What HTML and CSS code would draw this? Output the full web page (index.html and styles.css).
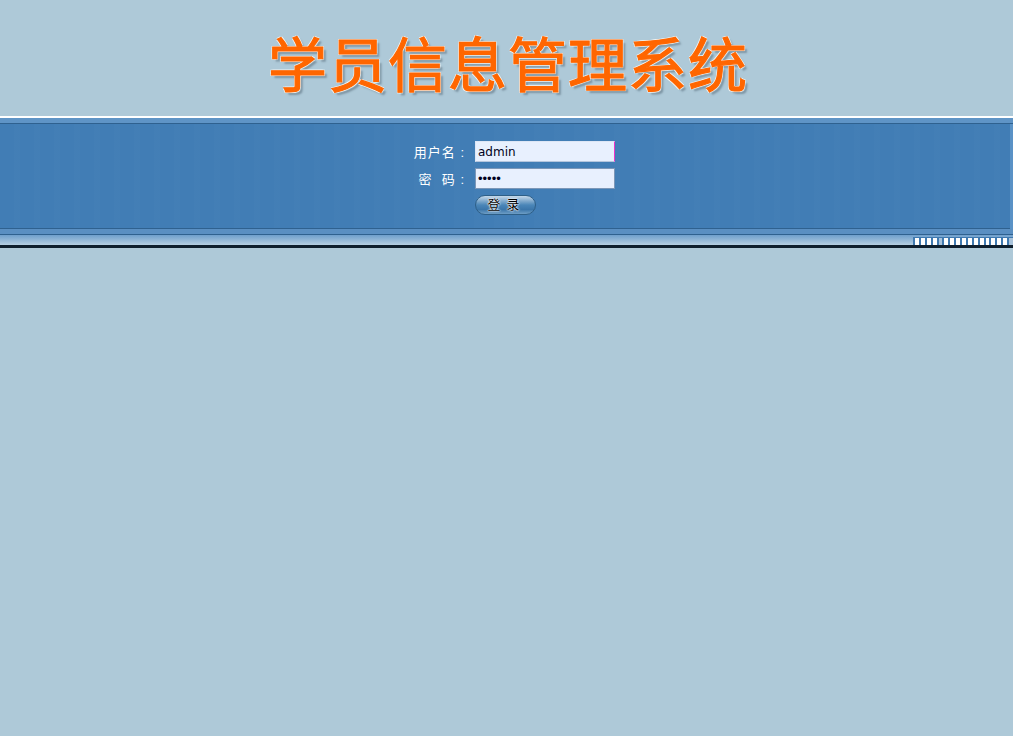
FILE: index.html
```html
<!DOCTYPE html>
<html lang="zh-CN">
<head>
  <meta charset="UTF-8">
  <title>学员信息管理系统</title>
  <link rel="stylesheet" href="styles.css">
</head>
<body>
  <div class="header">
    <h1 class="title">学员信息管理系统</h1>
  </div>
  <div class="band">
    <form class="login">
      <div class="row">
        <label class="label">用户名&nbsp;:</label>
        <input type="text" class="field field-active" value="admin">
      </div>
      <div class="row">
        <label class="label">密&nbsp;&nbsp;码&nbsp;:</label>
        <input type="password" class="field field-pass" value="admin">
      </div>
      <div class="row row-btn">
        <span class="label"></span>
        <button type="button" class="login-btn">登&nbsp;&nbsp;录</button>
      </div>
    </form>
  </div>
  <div class="footer-strip">
    <div class="squares">
      <i></i><i></i><i></i><i></i><i class="dim"></i><i></i><i></i><i></i><i></i>
      <i></i><i></i><i></i><i></i><i></i><i></i><i></i><i class="dim"></i>
    </div>
  </div>
</body>
</html>
```

FILE: styles.css
```css
* { box-sizing: border-box; }
html, body {
  margin: 0;
  height: 100%;
}
body {
  background: #aec9d8;
  font-family: "Liberation Sans", "Noto Sans CJK SC", sans-serif;
  overflow: hidden;
}
.header {
  height: 116px;
  display: flex;
  justify-content: center;
  padding: 23px 0 0 3px;
}
.title {
  margin: 0;
  font-family: "Noto Sans CJK SC", sans-serif;
  font-size: 59px;
  line-height: 78px;
  letter-spacing: 1px;
  font-weight: 400;
  color: #ff6600;
  -webkit-text-stroke: 1.2px #ff6600;
  white-space: nowrap;
  text-shadow:
    -1px -1px 0 #f4f5f2,
    1px -1px 0 #f4f5f2,
    -1px 1px 0 #f4f5f2,
    1px 1px 1px #fafaf6,
    3px 3px 2px #7d95a4;
}
.band {
  height: 113px;
  border-top: 2px solid #fff;
  background:
    repeating-linear-gradient(90deg, rgba(255,255,255,0) 0, rgba(255,255,255,0) 14px, rgba(255,255,255,0.01) 14px, rgba(255,255,255,0.01) 20px),
    #417db5;
  display: flex;
  justify-content: center;
  padding-top: 23px;
  box-shadow: inset 0 5px 0 #5f94c6, inset 0 6px 0 #2f618f, inset -3px 0 0 #5a92c6, inset 0 -1px 0 #2f618f;
}
.login {
  display: flex;
  flex-direction: column;
  width: 202px;
  margin-left: 15px;
}
.row {
  display: flex;
  align-items: center;
  height: 21px;
  margin-bottom: 6px;
}
.label {
  width: 62px;
  padding-right: 10px;
  text-align: right;
  color: #fff;
  font-size: 13px;
  letter-spacing: 1px;
  white-space: nowrap;
  flex: none;
}
.field {
  width: 140px;
  height: 21px;
  padding: 0 2px;
  border: 1px solid #7c97b8;
  background: #e8f0fe;
  color: #000020;
  font-family: "DejaVu Sans", sans-serif;
  font-size: 12px;
  outline: none;
}
.field-pass {
  font-family: "Liberation Sans", sans-serif;
  font-size: 13px;
}
.field-active {
  border-color: #ee33cc;
  border-top-color: #dde6f5;
  border-left-color: #dde6f5;
  border-bottom-color: #b5c6dd;
}
.row-btn {
  height: 20px;
  margin: 0;
}
.login-btn {
  width: 61px;
  height: 20px;
  padding: 0 4px 2px 0;
  border: 1px solid #2e5f87;
  border-radius: 10px;
  background: linear-gradient(180deg, #c4d8ea 0, #7ba6ca 30%, #4a86b8 50%, #3b76aa 75%, #6d9dc5 100%);
  color: #000;
  font-family: "Noto Sans CJK SC", sans-serif;
  font-size: 13px;
  line-height: 16px;
  text-shadow: 0 0 1px #fff, 0 0 2px #fff, 0 0 2px #fff;
}
.footer-strip {
  height: 19px;
  border-bottom: 3px solid #0e1f2e;
  background: linear-gradient(180deg, #5a8fc2 0, #5a8fc2 5px, #2f618f 5px, #2f618f 6px, #6f9fcc 6px, #b5cfe2 100%);
  display: flex;
  justify-content: flex-end;
  align-items: flex-end;
}
.squares {
  width: 100px;
  height: 8px;
  display: flex;
  background: #3f79b0;
  padding: 1px 0 0;
}
.squares i {
  flex: 1;
  margin-left: 2px;
  background: #fff;
}
.squares i.dim {
  background: #a9c3db;
}
```
